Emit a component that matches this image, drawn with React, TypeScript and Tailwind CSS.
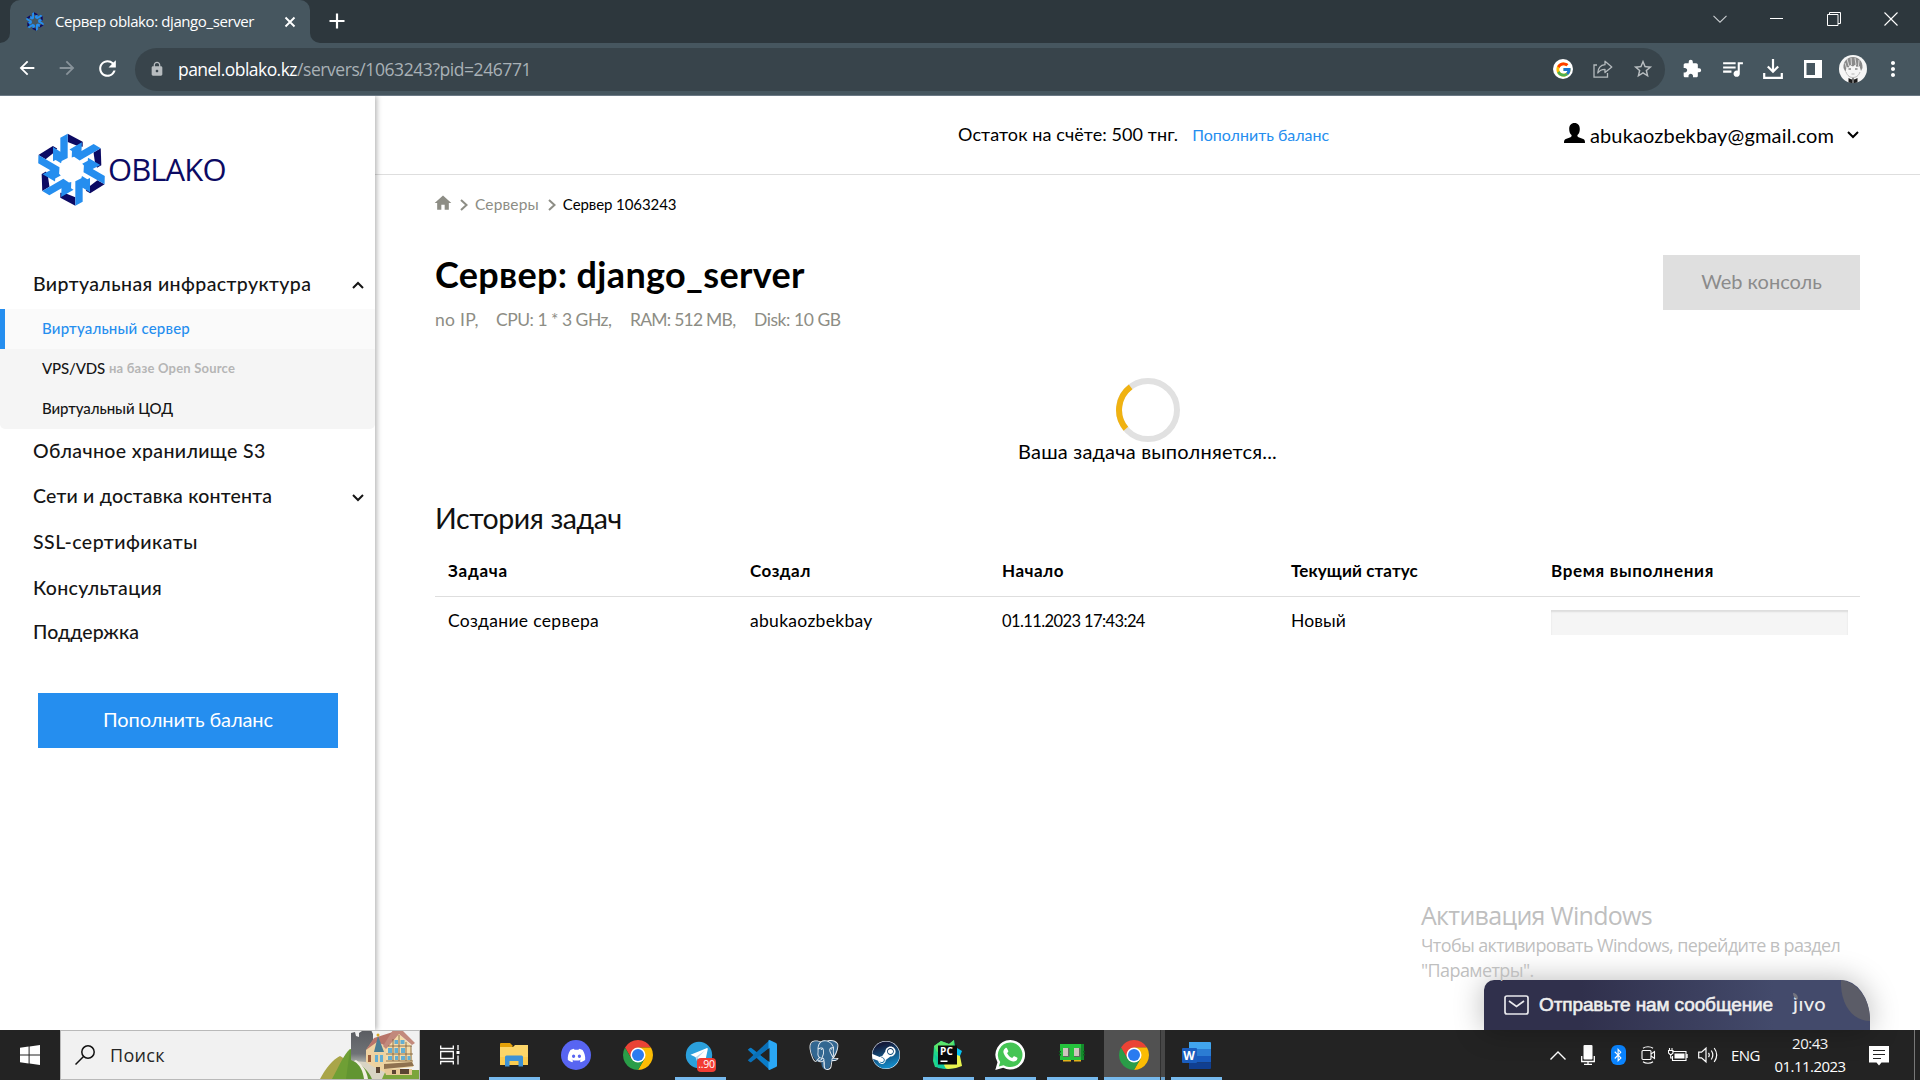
import React from "react";
import {
  MdArrowBack,
  MdArrowForward,
  MdExtension,
  MdHome,
  MdLock,
  MdMoreVert,
  MdQueueMusic,
  MdRefresh,
  MdStarBorder,
} from "react-icons/md";
import { FcGoogle } from "react-icons/fc";
import { FaBluetoothB, FaDiscord, FaSteam } from "react-icons/fa";
import { SiPostgresql } from "react-icons/si";

const ARM_LIGHT = "204,117 182,129 182,171 160,157 160,200 168,196 184,206 186,199 204,190";
const ARM_DARK = "204,117 249,141 249,156 234,154 204,142";

function LogoMark({ className }: { className: string }) {
  const turns = [0, 60, 120, 180, 240, 300];
  return (
    <svg viewBox="112 115 207 220" className={className}>
      {turns.map((a) => (
        <polygon key={a} points={ARM_DARK} fill="#0c0a63" transform={`rotate(${a} 215.5 225)`} />
      ))}
      {turns.map((a) => (
        <polygon key={a} points={ARM_LIGHT} fill="#258eef" transform={`rotate(${a} 215.5 225)`} />
      ))}
    </svg>
  );
}

function Chevron({ up = false, className = "" }: { up?: boolean; className?: string }) {
  return (
    <svg viewBox="0 0 12 8" fill="none" stroke="currentColor" strokeWidth="2" className={`h-2 w-3 ${className}`}>
      <path d={up ? "M1 7 6 2l5 5" : "M1 1l5 5 5-5"} />
    </svg>
  );
}

function TabStrip() {
  return (
    <div className="flex h-[43px] items-stretch bg-[#2d373d]">
      <div className="flex w-[10px] items-end bg-[#46565f]">
        <div className="h-full w-full rounded-br-[10px] bg-[#2d373d]" />
      </div>
      <div className="flex w-[300px] items-center rounded-t-[10px] bg-[#46565f] pl-4">
        <LogoMark className="h-[19px] w-[18px]" />
        <span className="ml-[11px] w-[205px] whitespace-nowrap font-['Open_Sans',sans-serif] text-[15px] leading-[41px] tracking-[-0.4px] text-white">
          Сервер oblako: django_server
        </span>
        <svg viewBox="0 0 12 12" className="ml-[24px] h-3 w-3" stroke="#fff" strokeWidth="1.9">
          <path d="M1.5 1.5l9 9M10.5 1.5l-9 9" />
        </svg>
      </div>
      <div className="w-[10px] bg-[#46565f]">
        <div className="h-full w-full rounded-bl-[10px] bg-[#2d373d]" />
      </div>
      <div className="flex items-center pb-px pl-[9px]">
        <svg viewBox="0 0 16 16" className="h-4 w-4" stroke="#fff" strokeWidth="2.2">
          <path d="M8 .5v15M.5 8h15" />
        </svg>
      </div>
      <div className="ml-auto flex h-[37px] items-center pr-[1px]">
        <div className="flex w-[56px] justify-center">
          <svg viewBox="0 0 14 8" className="h-2 w-[14px]" fill="none" stroke="#c9cdd0" strokeWidth="1.1">
            <path d="M.5.8 7 7.2 13.5.8" />
          </svg>
        </div>
        <div className="flex w-[57px] justify-center">
          <div className="h-px w-[13px] bg-white" />
        </div>
        <div className="flex w-[58px] justify-center">
          <svg viewBox="0 0 14 14" className="h-[14px] w-[14px]" fill="none" stroke="#fff">
            <path d="M.5 2.5h10.500v11H.5zM2.500 2.500V.5h11v11h-2.500" />
          </svg>
        </div>
        <div className="flex w-[56px] justify-center">
          <svg viewBox="0 0 14 14" className="h-[14px] w-[14px]" fill="none" stroke="#fff" strokeWidth="1.1">
            <path d="M.5.5l13 13M13.500.5l-13 13" />
          </svg>
        </div>
      </div>
    </div>
  );
}

function Avatar() {
  return (
    <svg viewBox="0 0 28 28" className="h-7 w-7">
      <circle cx="14" cy="14" r="14" fill="#f6f6f6" />
      <path d="M4.500 13C4 6 8.500 2 14 2s10 4 9.500 11l-1.500 3-1.500-5-3 1-1-2.500-2.500 2-3-1.500-1.500 2.500-2-.5-1 5z" fill="#8a8a8a" />
      <path d="M8 4l2 7M12 3l.5 7M16 3l1 7M20 5l-.5 6M6 8l1.500 5" stroke="#e2e2e2" strokeWidth=".9" />
      <path d="M9.500 14h2.500M16 14h2.500" stroke="#555" strokeWidth="1.100" />
      <path d="M12.500 19h3" stroke="#999" strokeWidth=".7" />
      <path d="M7 17c1.500 4 4 5.500 7 5.500s5.500-1.500 7-5.500" fill="none" stroke="#aaa" strokeWidth=".8" />
      <path d="M9.500 23l3 1.500L14 23l1.500 1.500 3-1.500v4.200c-3 1.200-6 1.200-9 0z" fill="#1b1b1b" />
      <path d="M14 24v4" stroke="#eee" strokeWidth=".8" />
    </svg>
  );
}

function Toolbar() {
  return (
    <div className="flex h-[53px] items-center border-b border-[#6b7985] bg-[#46565f] pl-[7px] text-white">
      <div className="flex w-10 justify-center pb-0.5"><MdArrowBack className="h-[22px] w-[22px]" /></div>
      <div className="flex w-10 justify-center pb-0.5"><MdArrowForward className="h-[22px] w-[22px] text-[#88939a]" /></div>
      <div className="flex w-[41px] justify-center pb-0.5"><MdRefresh className="h-[25px] w-[25px]" /></div>
      <div className="ml-[7px] flex h-[43px] w-[1530px] items-center rounded-full bg-[#38444b] pl-[14px] pr-[3px]">
        <MdLock className="h-4 w-4 text-[#b7bcbf]" />
        <div className="ml-[13px] flex pt-px font-['Open_Sans',sans-serif] text-[17.5px]">
          <span className="tracking-[-0.54px] text-white">panel.oblako.kz</span>
          <span className="tracking-[-0.43px] text-[#a9b1b6]">/servers/1063243?pid=246771</span>
        </div>
        <div className="ml-auto flex w-10 justify-center">
          <div className="flex h-5 w-5 items-center justify-center rounded-full bg-white">
            <FcGoogle className="h-[17px] w-[17px]" />
          </div>
        </div>
        <div className="flex w-10 justify-center">
          <svg viewBox="0 0 20 18" className="h-[18px] w-5" fill="none" stroke="#b4babd" strokeWidth="1.300">
            <path d="M4 5H1v12.200h13.500V13" />
            <path d="M12 1.200 18.800 7 12 12.600V9.300C8.500 9.300 6.300 10.600 4.800 13 5 8.500 7.500 5.200 12 4.700z" strokeLinejoin="round" />
          </svg>
        </div>
        <div className="flex w-[39px] justify-center"><MdStarBorder className="h-[22px] w-[22px] text-[#b9bec1]" /></div>
      </div>
      <div className="ml-[7px] flex w-10 justify-center pb-px"><MdExtension className="h-5 w-5" /></div>
      <div className="flex w-10 justify-center pb-0.5"><MdQueueMusic className="h-[25px] w-[25px]" /></div>
      <div className="ml-px flex w-10 justify-center pb-px">
        <svg viewBox="0 0 20 20" className="h-5 w-5" fill="none" stroke="#fff" strokeWidth="2.2">
          <path d="M10 0v12M4.800 7.500 10 12.700l5.200-5.200M1.200 14v4.800h17.600V14" />
        </svg>
      </div>
      <div className="flex w-[39px] justify-center">
        <svg viewBox="0 0 18 18" className="h-[18px] w-[18px]">
          <path fill="#fff" fillRule="evenodd" d="M0 0h18v18H0zM2.500 3v12H11V3z" />
        </svg>
      </div>
      <div className="ml-px flex w-10 justify-center"><Avatar /></div>
      <div className="flex w-[39px] justify-center"><MdMoreVert className="h-6 w-6" /></div>
    </div>
  );
}

function Sidebar() {
  const item = "flex items-center whitespace-nowrap pl-[33px] pr-[11px] text-[19.5px] font-medium text-[#151515]";
  return (
    <aside className="relative z-10 flex w-[375px] shrink-0 flex-col bg-white shadow-[2px_0_5px_rgba(0,0,0,0.28)]">
      <div className="flex h-[162px] pl-[37px] pt-[37px]">
        <LogoMark className="h-[73.300px] w-[69px]" />
        <span className="ml-[2px] font-['Open_Sans',sans-serif] text-[31px] leading-[72px] tracking-[-0.900px] text-[#0c0a63]">OBLAKO</span>
      </div>
      <div className={`${item} h-[51px] justify-between pt-px`}>
        <span className="tracking-[0.4px]">Виртуальная инфраструктура</span>
        <Chevron up className="mt-px" />
      </div>
      <div className="overflow-hidden rounded-b-[5px] bg-[#f5f5f5] text-[15px] font-medium text-[#151515]">
        <div className="flex h-10 items-center border-l-[5px] border-[#258eef] bg-[#fafafa] pb-[2px] pl-[37px] text-[#258eef]">
          <span className="tracking-[0.2px]">Виртуальный сервер</span>
        </div>
        <div className="flex h-10 items-center pb-[2px] pl-[42px]">
          <span className="tracking-[-0.17px]">VPS/VDS</span>
          <span className="ml-[4px] pt-0.5 text-[13px] font-bold tracking-[0.2px] text-[#b5b5b5]">на базе Open Source</span>
        </div>
        <div className="flex h-10 items-center pb-[2px] pl-[42px]">
          <span className="tracking-[-0.07px]">Виртуальный ЦОД</span>
        </div>
      </div>
      <div className={`${item} h-[43px]`}><span className="tracking-[0.37px]">Облачное хранилище S3</span></div>
      <div className={`${item} h-[46px] justify-between pt-0.5`}>
        <span className="tracking-[0.21px]">Сети и доставка контента</span>
        <Chevron className="mt-[3px]" />
      </div>
      <div className={`${item} h-[47px] pt-px`}><span className="tracking-[0.5px]">SSL-сертификаты</span></div>
      <div className={`${item} h-[44px] pt-px`}><span className="tracking-[0.34px]">Консультация</span></div>
      <div className={`${item} h-[45px] pt-px`}><span className="tracking-[0.08px]">Поддержка</span></div>
      <button className="ml-[38px] mt-[39px] h-[55px] w-[300px] bg-[#258eef] pb-[3px] text-[20px] tracking-[-0.09px] text-white">
        Пополнить баланс
      </button>
    </aside>
  );
}

function Header() {
  return (
    <header className="flex h-[79px] items-center border-b border-[#dedede] pb-px pl-[583px] pr-[61px] text-black">
      <span className="whitespace-nowrap text-[18px] tracking-[0.1px]">Остаток на счёте: 500 тнг.</span>
      <a className="ml-[14px] whitespace-nowrap text-[16px] tracking-[-0.01px] text-[#258eef]">Пополнить баланс</a>
      <div className="ml-auto flex items-center">
        <svg viewBox="0 0 21 20" className="mb-[3px] mr-[5px] h-5 w-[21px]" fill="#000">
          <path d="M10.500 0c3.400 0 5.300 2.500 5.300 5.900 0 2.800-.9 4.900-2.300 6.200-.3 1 0 1.700 1 2.100l4.700 1.900c1.300.5 1.800 1.500 1.800 3.900H0c0-2.400.5-3.400 1.800-3.900l4.700-1.900c1-.4 1.300-1.100 1-2.100C6.100 10.800 5.200 8.700 5.200 5.900 5.200 2.500 7.100 0 10.500 0z" />
        </svg>
        <span className="pt-px text-[20px] tracking-[0.150px]">abukaozbekbay@gmail.com</span>
        <Chevron className="ml-[13px] mt-px" />
      </div>
    </header>
  );
}

function CrumbArrow() {
  return (
    <svg viewBox="0 0 8 12" className="h-3 w-2" fill="none" stroke="#8d8d85" strokeWidth="2">
      <path d="M1 1l5.500 5L1 11" />
    </svg>
  );
}

function Spinner() {
  return (
    <svg viewBox="0 0 64 64" className="h-16 w-16" fill="none" strokeWidth="6">
      <circle cx="32" cy="32" r="29" stroke="#e1e1e1" />
      <path d="M14.600 8.800A29 29 0 0 0 9.900 50.700" stroke="#f0b211" />
    </svg>
  );
}

function TaskTable() {
  const grid = "grid grid-cols-[301px_253px_289px_260px_297px] items-center pl-[13px] whitespace-nowrap text-black";
  return (
    <div>
      <div className={`${grid} h-[60px] border-b border-[#dedede] pt-2 text-[17px] font-bold`}>
        <span className="tracking-[0.77px]">Задача</span>
        <span className="ml-px tracking-[0.5px]">Создал</span>
        <span className="tracking-[0.5px]">Начало</span>
        <span className="tracking-[0.11px]">Текущий статус</span>
        <span className="tracking-[0.67px]">Время выполнения</span>
      </div>
      <div className={`${grid} h-[47px] text-[17.5px]`}>
        <span className="pt-0.5 tracking-[0.33px]">Создание сервера</span>
        <span className="ml-px pt-0.5 tracking-[0.3px]">abukaozbekbay</span>
        <span className="pt-0.5 text-[16.500px] tracking-[-0.600px]">01.11.2023 17:43:24</span>
        <span className="pt-0.5 tracking-[0.1px]">Новый</span>
        <div className="mt-1 h-[25px] bg-[#f5f5f5] shadow-[inset_0_2px_2px_rgba(0,0,0,0.1)]" />
      </div>
    </div>
  );
}

function Main() {
  return (
    <div className="flex min-w-0 flex-1 flex-col">
      <Header />
      <main className="pl-[60px] pr-[60px]">
        <nav className="flex h-[58px] items-center text-[15px] text-black">
          <MdHome className="-ml-[2px] mb-[3px] h-5 w-5 text-[#8d8d85]" />
          <div className="ml-[7px] pt-px"><CrumbArrow /></div>
          <span className="ml-[7px] pt-0.5 text-[15.500px] tracking-[0.150px] text-[#8d8d85]">Серверы</span>
          <div className="ml-[9px] pt-px"><CrumbArrow /></div>
          <span className="ml-[7px] pt-px tracking-[-0.08px]">Сервер 1063243</span>
        </nav>
        <div className="flex justify-between">
          <div>
            <h1 className="flex h-[76px] items-center pt-1.5 text-[36px] font-bold tracking-[0.34px] text-black">Сервер: django_server</h1>
            <div className="flex h-[21px] items-center whitespace-nowrap pt-0.5 text-[17.5px] text-[#8d8d85]">
              <span className="w-[61px] tracking-[0.300px]">no IP,</span>
              <span className="w-[134px] tracking-[-0.5px]">CPU: 1 * 3 GHz,</span>
              <span className="w-[124px] tracking-[-0.75px]">RAM: 512 MB,</span>
              <span className="tracking-[-0.45px]">Disk: 10 GB</span>
            </div>
          </div>
          <button className="mt-[22px] h-[55px] w-[197px] bg-[#dfdfdf] pb-[4px] text-[20px] text-[#8b8b8b]">Web консоль</button>
        </div>
        <div className="flex flex-col items-center pt-12">
          <Spinner />
          <p className="h-[19px] text-[20px] leading-[19px] tracking-[0.19px] text-black">Ваша задача выполняется...</p>
        </div>
        <h2 className="mt-[37px] h-[39px] text-[28.5px] leading-[40px] tracking-[-0.400px] text-[#111111]">История задач</h2>
        <TaskTable />
      </main>
    </div>
  );
}

function Watermark() {
  return (
    <div className="absolute left-[1421px] top-[900px] whitespace-nowrap font-['Open_Sans',sans-serif] text-[#bfbfbf]">
      <div className="h-8 text-[25px] leading-[31px] tracking-[-0.7px]">Активация Windows</div>
      <div className="text-[18px] leading-[26px] tracking-[-0.63px]">Чтобы активировать Windows, перейдите в раздел</div>
      <div className="text-[18px] leading-[24px] tracking-[-0.6px]">"Параметры".</div>
    </div>
  );
}

function ChatWidget() {
  return (
    <div className="absolute left-[1484px] top-[980px] h-[50px] w-[386px] rounded-tl-[10px] rounded-tr-[29px_40px] shadow-[0_0_30px_rgba(0,0,0,0.28)]">
      <div className="flex h-full items-center overflow-hidden rounded-tl-[10px] rounded-tr-[29px_40px] bg-linear-to-r from-[#30304c] from-25% to-[#434a6b] to-75% pl-5">
        <svg viewBox="0 0 25 20" className="h-5 w-[25px]" fill="none" stroke="#e8e8ec" strokeWidth="1.700">
          <rect x="1" y="1" width="23" height="18" rx="2" />
          <path d="M5 6l7.500 5.500L20 6" />
        </svg>
        <span className="ml-[10px] whitespace-nowrap font-['Liberation_Sans',Arial,sans-serif] text-[19px] tracking-[-0.110px] text-[#eeeeee] [-webkit-text-stroke:0.6px_#eeeeee]">
          Отправьте нам сообщение
        </span>
        <span className="ml-[20px] pb-1 text-[20px] font-medium leading-none tracking-[0.5px] text-[#eeeeee]">jıvo</span>
        <svg viewBox="0 0 29 42" className="absolute right-0 top-0 h-[42px] w-[29px]">
          <path d="M0 0c16 2 29 18 29 41C13 41-1 26 0 0z" fill="#5b5c67" />
        </svg>
        <svg viewBox="0 0 5 6" className="absolute left-[309px] top-[13px] h-[6px] w-[5px]">
          <path d="M0 0c3 0 5 2.500 5 6C2 6 0 3 0 0z" fill="#74757f" />
        </svg>
      </div>
    </div>
  );
}

function ChromeIcon() {
  return (
    <svg viewBox="2 2 44 44" className="h-[30px] w-[30px]">
      <path fill="#ea4335" d="M4.950 13A22 22 0 0 1 43.050 13H24l-9.530 16.500z" />
      <path fill="#fbbc04" d="M43.050 13A22 22 0 0 1 24 46l9.530-16.500L24 13z" />
      <path fill="#2a9d48" d="M24 46A22 22 0 0 1 4.950 13l9.520 16.500h19.060z" />
      <circle cx="24" cy="24" r="11" fill="#fff" />
      <circle cx="24" cy="24" r="8.800" fill="#2a7bf0" />
    </svg>
  );
}

function ExplorerIcon() {
  return (
    <svg viewBox="0 0 28 24" className="h-6 w-7">
      <path d="M0 2V1q0-1 1-1h9l2.500 2.500V5H0z" fill="#e3a008" />
      <path d="M0 4h13l2-2h13v20H0z" fill="#fcd568" />
      <path d="M0 14h28v8H0z" fill="#fbcb4f" />
      <path d="M5 23.500V14q0-1.500 1.500-1.500h15q1.500 0 1.500 1.500v9.500h-4.500V18h-9v5.500z" fill="#3d92d6" />
    </svg>
  );
}

function TelegramIcon() {
  return (
    <div className="relative h-[30px] w-[30px]">
      <svg viewBox="0 0 30 30" className="h-[30px] w-[30px]">
        <circle cx="14" cy="15" r="13.200" fill="#2ba0dc" />
        <path d="M5.500 14.800 21.500 8.200c.8-.3 1.400.2 1.200 1.200l-2.600 12.500c-.2.900-.8 1.100-1.500.7L10.300 17z" fill="#fff" />
        <path d="M10.500 17.200 20 10.500l-7.500 7.700-.5 3.400z" fill="#b8d9ee" />
      </svg>
      <span className="absolute left-[12px] top-[18px] flex h-[14px] w-[19px] items-center justify-center rounded-[4px] bg-[#f23c34] font-['Open_Sans',sans-serif] text-[10.500px] tracking-[-0.3px] text-white">
        ..90
      </span>
    </div>
  );
}

function VsCodeIcon() {
  return (
    <svg viewBox="0 0 30 30" className="h-[30px] w-[30px]">
      <path d="M.8 9.800 2.800 8q.8-.6 1.600 0L22.500 22v7.800z" fill="#0a7cc8" />
      <path d="M.8 20.200 2.800 22q.8.600 1.600 0L22.500 8V.2z" fill="#0a70b8" />
      <path d="M21.500.3 22.500 0 29 3q1 .5 1 1.600v20.800q0 1.100-1 1.600l-6.500 3-1-.3z" fill="#2aa7f5" />
      <path d="M22.500 8v14l-9-7z" fill="#232323" />
    </svg>
  );
}

function PostgresIcon() {
  return (
    <div className="relative h-[30px] w-[30px]">
      <svg viewBox="0 0 24 24" className="absolute left-0 top-0 h-[30px] w-[30px]">
        <path d="M1 5C1.500 1 6 0 9 1.200 12-.2 15 .4 16.500 1c3-1.200 6.500.3 6.500 4.500 0 3-1.500 6.500-3.500 9.500l3 .2c-1 1.600-3 2-5 2-.3 3-.8 6-3.500 6.300-3.300.3-4-2.500-4.200-6.500-1.500 0-2 1-3.500 0C3.500 15 1 9 1 5z" fill="#336791" />
      </svg>
      <SiPostgresql className="absolute left-0 top-0 h-[30px] w-[30px] text-[#e6ecf1]" />
    </div>
  );
}

function PyCharmIcon() {
  return (
    <div className="relative h-[30px] w-[30px]">
      <svg viewBox="0 0 30 30" className="h-[30px] w-[30px]">
        <path d="M1 6 8 1l8 3 5-4 1 6 3 4-3 18-8 1-12-2-2-6z" fill="#21d789" />
        <path d="M1 6 8 1l8 3 5-4-1 8-16 4z" fill="#5be36b" />
        <path d="M24 8l5 3-2 5-4 1z" fill="#07c3f2" />
        <path d="M8 27l16-12 3 1 2 10-6 2-8 1z" fill="#e8f34e" />
        <path d="M1 14l4 14 8 1-4-8z" fill="#10c8a0" />
        <rect x="5" y="5.500" width="19" height="19" fill="#0a0a0a" />
        <rect x="7.500" y="20.500" width="7" height="1.500" fill="#fff" />
      </svg>
      <span className="absolute left-[7px] top-[6px] font-['Open_Sans',sans-serif] text-[10px] font-bold leading-[11px] tracking-[0.3px] text-white">PC</span>
    </div>
  );
}

function WhatsAppIcon() {
  return (
    <svg viewBox="0 0 30 30" className="h-[30px] w-[30px]">
      <path d="M15.200 0a14.800 14.800 0 1 1-7 27.800L.3 30l2.200-7.700A14.800 14.800 0 0 1 15.200 0z" fill="#fff" />
      <path d="M15.200 2.500A12.300 12.300 0 1 1 8.600 25.200l-4.800 1.300 1.400-4.600A12.300 12.300 0 0 1 15.200 2.500z" fill="#45c554" />
      <path d="M10.300 8.200c.6-.6 1.500-.5 1.800.2l1.200 2.700c.2.500 0 .8-1.200 2.200 1.300 2.400 2.800 3.700 5.100 4.700 1.400-1.700 1.600-2 2.200-1.700l2.600 1.300c.5.300.5.500.4 1.200-.4 2-2.500 3-4.400 2.700-5-1-8.600-5-9.600-9.200-.2-1.600.7-3.200 1.900-4.100z" fill="#fff" />
    </svg>
  );
}

function BoardIcon() {
  return (
    <svg viewBox="0 0 26 18" className="h-[18px] w-[26px]">
      <path d="M1 0h24v16H1z" fill="#25c23c" />
      <path d="M22 0h3v16h-3z" fill="#128a2a" />
      <path d="M0 7h2v1.500H0zM0 10h2v1.500H0zM24 7h2v1.500h-2zM24 10h2v1.500h-2z" fill="#0d5f1c" />
      <path d="M4 4h6.500v9H4zM15 4h6.500v9H15z" fill="#5f6b5f" />
      <path d="M4 4h5v8H4zM15 4h5v8h-5z" fill="#cfc6bd" />
      <path d="M4 16h8v1.500H4zM15 16h7v1.500h-7z" fill="#e3b31b" />
    </svg>
  );
}

function WordIcon() {
  return (
    <div className="relative h-[27px] w-[29px]">
      <svg viewBox="0 0 29 27" className="h-[27px] w-[29px]">
        <path d="M7 0h21q1 0 1 1v6H7z" fill="#41a5ee" />
        <path d="M7 7h22v7H7z" fill="#2b7cd3" />
        <path d="M7 14h22v6.500H7z" fill="#185abd" />
        <path d="M7 20.500h22V26q0 1-1 1H7z" fill="#103f91" />
        <rect y="6" width="15" height="15" rx="1" fill="#1a5dbe" />
      </svg>
      <span className="absolute left-0 top-[6px] w-[15px] text-center font-['Open_Sans',sans-serif] text-[12px] font-bold leading-[15px] text-white">W</span>
    </div>
  );
}

function SearchArt() {
  return (
    <svg viewBox="0 0 99 49" className="h-[49px] w-[99px]">
      <defs>
        <linearGradient id="ruin" x1="0" y1="0" x2="0" y2="1">
          <stop offset="0" stopColor="#5a5c61" />
          <stop offset="0.7" stopColor="#6f7276" />
          <stop offset="1" stopColor="#b9bcb4" />
        </linearGradient>
      </defs>
      <path d="M0 49C6 38 12 30 20 26c6 3 10 10 14 23z" fill="#a9a548" />
      <path d="M12 49C18 38 24 24 30 19c8 4 18 18 24 30z" fill="#6f9f35" />
      <path d="M30 19c8 4 16 14 22 30H26z" fill="#5c9230" opacity=".7" />
      <path d="M31 3l4-1 1 4 3 1V3l3-2 9-1 2 4v28l-14 2-8-4z" fill="url(#ruin)" />
      <path d="M34 31c8 4 14 9 18 18h34l-8-14z" fill="#d9d4c4" />
      <path d="M34 31c6 4 9 10 10 18h4c-1-8-6-15-12-19z" fill="#f3efe2" />
      <path d="M66 40h33v9H62z" fill="#7ba53b" />
      <path d="M46 20l8-11 12 8v26l-14-7-6-4z" fill="#efd3a2" />
      <path d="M46 20 54 8l22-7-10 15-9-4z" fill="#b8746a" />
      <path d="M66 17 77 2l14 13 2 22-27 3z" fill="#f3dba9" />
      <path d="M63 16 73 0h9l13 13-3 2L79 4 66 19z" fill="#c2897c" />
      <path d="M54 22 58 6l6 16z" fill="#4a7d93" />
      <circle cx="58" cy="5" r="1.500" fill="#d9a520" />
      <path d="M54 23h10v17l-10-4z" fill="#ecd2a0" />
      <path d="M68 16h24M66 24h27M66 31h27M79 5v26M86 12v19M73 9v22M91 16v15" stroke="#7a5a38" strokeWidth=".8" fill="none" />
      <path d="M74.500 10h3.500v4h-3.500zM80.500 10h4v4h-4zM68 18h4v5h-4zM74.500 18h3.500v5h-3.500zM81 18h4v5h-4zM68 26h4v4h-4zM75 26h3v4h-3zM81 26h4v4h-4zM87.500 26h3v4h-3zM55 25h3v7h-3zM60 25h3v7h-3z" fill="#64aed2" />
      <path d="M64 34l28-2 2 4-30 3z" fill="#8f7250" />
      <path d="M64 39h28v6H66z" fill="#e6c996" />
      <path d="M56 37h4v6h-4zM72 40h4v4h-4zM80 39h9v5h-9z" fill="#5a4433" />
      <path d="M48 25h3v7h-3z" fill="#9c5d3a" />
    </svg>
  );
}

type TaskApp = { name: string; icon: React.ReactNode; running?: boolean; active?: boolean };

const apps: TaskApp[] = [
  { name: "explorer", icon: <ExplorerIcon />, running: true },
  {
    name: "discord",
    icon: (
      <div className="flex h-[30px] w-[30px] items-center justify-center rounded-full bg-[#5865f2]">
        <FaDiscord className="h-[19px] w-[19px] text-white" />
      </div>
    ),
  },
  { name: "chrome", icon: <ChromeIcon /> },
  { name: "telegram", icon: <TelegramIcon />, running: true },
  { name: "vscode", icon: <VsCodeIcon /> },
  { name: "postgres", icon: <PostgresIcon /> },
  {
    name: "steam",
    icon: (
      <div className="flex h-7 w-7 items-center justify-center rounded-full bg-[#14305c]">
        <div className="rounded-full bg-white">
          <svg width="0" height="0" className="absolute">
            <linearGradient id="steam" x1="0" y1="0" x2="0.3" y2="1">
              <stop offset="0.2" stopColor="#131a3a" />
              <stop offset="1" stopColor="#1387c4" />
            </linearGradient>
          </svg>
          <FaSteam className="h-7 w-7" fill="url(#steam)" />
        </div>
      </div>
    ),
  },
  { name: "pycharm", icon: <PyCharmIcon />, running: true },
  { name: "whatsapp", icon: <WhatsAppIcon />, running: true },
  { name: "board", icon: <div className="pb-1"><BoardIcon /></div>, running: true },
  { name: "chrome-active", icon: <ChromeIcon />, running: true, active: true },
  { name: "word", icon: <WordIcon />, running: true },
];

function TaskbarApp({ app }: { app: TaskApp }) {
  if (app.active) {
    return (
      <div className="flex w-[62px] pl-px">
        <div className="flex w-14 flex-col items-center justify-between bg-[#515151]">
          <div className="flex h-[47px] items-center pl-[4px] pt-[3px]">{app.icon}</div>
          <div className="h-[3px] w-full bg-[#76b9ed]" />
        </div>
        <div className="flex w-[5px] flex-col justify-end border-l border-[#303030] bg-[#474747]">
          <div className="h-[3px] bg-[#6aa3d0]" />
        </div>
      </div>
    );
  }
  return (
    <div className="flex w-[62px] flex-col items-center">
      <div className="flex h-[47px] items-center pt-[3px]">{app.icon}</div>
      {app.running && <div className="mr-[-1px] h-[3px] w-[51px] bg-[#76b9ed]" />}
    </div>
  );
}

function Tray() {
  return (
    <div className="ml-auto flex items-center text-white">
      <div className="flex w-[30px] justify-center">
        <svg viewBox="0 0 16 9" className="h-[9px] w-4" fill="none" stroke="#fff" strokeWidth="1.400"><path d="M.5 8.500 8 1l7.500 7.500" /></svg>
      </div>
      <div className="flex w-[30px] justify-center">
        <svg viewBox="0 0 14 20" className="h-5 w-[14px]" fill="none" stroke="#fff" strokeWidth="1.300">
          <rect x="2.500" y="0" width="9" height="14.500" rx="1" fill="#fff" stroke="none" />
          <path d="M.7 11v5.500h12.600V11M7 16.500v3M3 19.300h8" />
        </svg>
      </div>
      <div className="flex w-[30px] justify-center">
        <div className="flex h-5 w-[15px] items-center justify-center rounded-[6px] bg-[#0a84ff]">
          <FaBluetoothB className="h-[14px] w-[12px]" />
        </div>
      </div>
      <div className="flex w-[30px] justify-center">
        <svg viewBox="0 0 15 18" className="h-[18px] w-[15px]" fill="none" stroke="#fff" strokeWidth="1.100">
          <rect x="1" y="4.500" width="9" height="9" rx="1" />
          <path d="M10 8l3.500-2.500v7L10 10M2 2.200C4.500.3 9.500.3 12 2.200M2 15.800c2.500 1.900 7.500 1.900 10 0" />
        </svg>
      </div>
      <div className="flex w-[30px] justify-center">
        <svg viewBox="0 0 20 14" className="h-[14px] w-5" fill="none" stroke="#fff" strokeWidth="1.100">
          <path d="M4.500 3.500h13.500v9H4.500V8" />
          <path d="M18.200 6h1.500v4h-1.500zM6.500 5.500h10v5h-10z" fill="#fff" stroke="none" />
          <path d="M1.500 0v2.500M4 0v2.500M.5 2.500h4.500v2.500L3.500 6.500h-1.500L.5 5zM2.700 6.500V10H5" />
        </svg>
      </div>
      <div className="flex w-[31px] justify-center">
        <svg viewBox="0 0 21 18" className="h-[18px] w-[21px]" fill="none" stroke="#fff" strokeWidth="1.200">
          <path d="M.7 6.200h2.800L8 2.200v13.600l-4.500-4H.7z" />
          <path d="M10.500 6.800q1.500 2.200 0 4.400M13.300 4.500q3 4.500 0 9M16.200 2q5 7 0 14" />
        </svg>
      </div>
      <div className="w-[43px] text-center text-[15px] tracking-[-0.5px]">ENG</div>
      <div className="flex w-[87px] flex-col items-center text-[15px] leading-[23px]">
        <span className="mr-px tracking-[-0.45px]">20:43</span>
        <span className="mr-px tracking-[-0.55px]">01.11.2023</span>
      </div>
      <div className="flex w-[50px] justify-center pt-px">
        <svg viewBox="0 0 20 20" className="h-5 w-5">
          <path d="M0 0h20v16.500h-7.500L10 19.500l-2.500-3H0z" fill="#fff" />
          <path d="M4 4.500h12M4 8.500h12M4 12.500h8" stroke="#232323" strokeWidth="1.200" />
        </svg>
      </div>
      <div className="ml-[10px] mr-[5px] h-[50px] w-px bg-[#777777]" />
    </div>
  );
}

function Taskbar() {
  return (
    <div className="flex h-[50px] items-stretch bg-[#232323] font-['Open_Sans',sans-serif]">
      <div className="flex w-[60px] items-center justify-center">
        <svg viewBox="0 0 20 20" className="h-5 w-5" fill="#fff">
          <path d="M0 2.800 8.600 1.600V9.500H0zM9.600 1.450 20 0v9.500H9.600zM0 10.500h8.600v7.900L0 17.200zM9.600 10.500H20V20L9.600 18.550z" />
        </svg>
      </div>
      <div className="flex w-[360px] items-center overflow-hidden border border-[#b9b9b9] bg-[#f1f1f1] pl-[14px]">
        <svg viewBox="0 0 20 20" className="h-5 w-5" fill="none" stroke="#111" strokeWidth="1.500">
          <circle cx="13" cy="7" r="6.200" />
          <path d="M8.500 11.500.5 19.500" />
        </svg>
        <span className="ml-[15px] text-[18px] tracking-[0.3px] text-[#262626]">Поиск</span>
        <div className="ml-auto self-end"><SearchArt /></div>
      </div>
      <div className="mr-[3px] flex w-[60px] items-center justify-center">
        <svg viewBox="0 0 20 20" className="h-5 w-5" fill="none" stroke="#fff" strokeWidth="1.300">
          <path d="M.7.5v3h12.600V.5M.7 19.500v-3h12.600v3M.7 6.500h12.600v7H.7zM18 0v5M18 10.500v9" />
          <path d="M16.500 6h3v3h-3z" fill="#fff" stroke="none" />
        </svg>
      </div>
      {apps.map((a) => (
        <TaskbarApp key={a.name} app={a} />
      ))}
      <Tray />
    </div>
  );
}

export default function App() {
  return (
    <div className="relative flex h-[1080px] w-[1920px] flex-col overflow-hidden bg-white font-['Lato',sans-serif]">
      <TabStrip />
      <Toolbar />
      <div className="flex h-[934px] overflow-hidden">
        <Sidebar />
        <Main />
      </div>
      <ChatWidget />
      <Watermark />
      <Taskbar />
    </div>
  );
}
